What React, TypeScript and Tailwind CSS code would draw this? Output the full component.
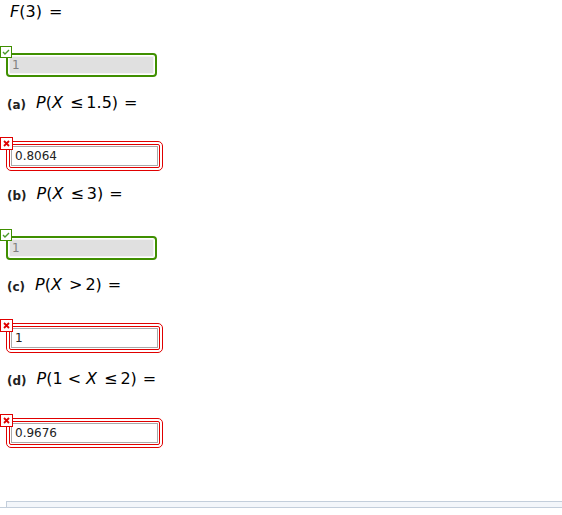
type Status = "right" | "wrong"

const font = { fontFamily: '"DejaVu Sans", Verdana, sans-serif' }

function Badge({ status }: { status: Status }) {
  if (status === "right") {
    return (
      <span className="absolute left-[-6px] top-[-7px] flex h-[12px] w-[12px] items-center justify-center border border-[#3f8f00] bg-white">
        <svg width="8" height="6" viewBox="0 0 8 6">
          <path d="M1 3 L3 5 L7 1" fill="none" stroke="#4a9a2a" strokeWidth="1.4" />
        </svg>
      </span>
    )
  }
  return (
    <span className="absolute left-[-6px] top-[-4px] flex h-[13px] w-[13px] items-center justify-center border border-[#e00000] bg-white">
      <svg width="7" height="7" viewBox="0 0 7 7">
        <path d="M1 1 L6 6 M6 1 L1 6" fill="none" stroke="#e00000" strokeWidth="1.8" />
      </svg>
    </span>
  )
}

function Answer({ status, value }: { status: Status; value: string }) {
  if (status === "right") {
    return (
      <div className="relative ml-[6px] w-[151px]">
        <Badge status={status} />
        <div className="rounded-[4px] border-2 border-[#3f8f00] bg-white p-[1px]">
          <div className="flex h-[18px] items-center border border-[#f4f4f4] bg-[#e0e0e0] px-[2px] text-[12px] text-[#808080]" style={font}>
            {value}
          </div>
        </div>
      </div>
    )
  }
  return (
    <div className="relative ml-[6px] w-[157px]">
      <Badge status={status} />
      <div className="rounded-[5px] border border-[#e00000] bg-white p-[2px]">
        <div className="rounded-[2px] border border-[#e00000] p-[1px]">
          <div className="flex h-[20px] items-center border border-[#a9a9a9] bg-white px-[3px] text-[12px] text-[#222]" style={font}>
            {value}
          </div>
        </div>
      </div>
    </div>
  )
}

function I({ children }: { children: string }) {
  return <span className="italic">{children}</span>
}

function Label({ tag, children }: { tag?: string; children: React.ReactNode }) {
  return (
    <div className="flex h-[24px] items-center text-black" style={font}>
      {tag && <span className="ml-[7px] mr-[10px] mt-[4px] text-[12px] font-bold text-[#222]">{tag}</span>}
      <span className={`text-[16px] ${tag ? "" : "ml-[10px]"}`}>{children}</span>
    </div>
  )
}

export default function App() {
  return (
    <div className="min-h-[515px] bg-white" style={font}>
      <Label>
        <I>F</I>(3)<span className="ml-[7px]">=</span>
      </Label>
      <div className="mt-[29px]">
        <Answer status="right" value="1" />
      </div>

      <div className="mt-[14px]">
        <Label tag="(a)">
          <I>P</I>(<I>X</I><span className="ml-[7px]">≤</span>
          <span className="ml-[3px]">1.5)</span>
          <span className="ml-[6px]">=</span>
        </Label>
      </div>
      <div className="mt-[26px]">
        <Answer status="wrong" value="0.8064" />
      </div>

      <div className="mt-[11px]">
        <Label tag="(b)">
          <I>P</I>(<I>X</I><span className="ml-[7px]">≤</span>
          <span className="ml-[3px]">3)</span>
          <span className="ml-[6px]">=</span>
        </Label>
      </div>
      <div className="mt-[30px]">
        <Answer status="right" value="1" />
      </div>

      <div className="mt-[13px]">
        <Label tag="(c)">
          <I>P</I>(<I>X</I><span className="ml-[7px]">&gt;</span>
          <span className="ml-[3px]">2)</span>
          <span className="ml-[6px]">=</span>
        </Label>
      </div>
      <div className="mt-[26px]">
        <Answer status="wrong" value="1" />
      </div>

      <div className="mt-[14px]">
        <Label tag="(d)">
          <I>P</I>(1<span className="ml-[5px]">&lt;</span>
          <span className="ml-[5px]"><I>X</I></span>
          <span className="ml-[7px]">≤</span>
          <span className="ml-[3px]">2)</span>
          <span className="ml-[6px]">=</span>
        </Label>
      </div>
      <div className="mt-[27px]">
        <Answer status="wrong" value="0.9676" />
      </div>

      <div className="mt-[53px]">
        <div className="ml-[6px] h-[6px] border-l border-t border-[#c3cedb] bg-[#f3f6fa]" />
        <div className="h-[1px] bg-[#c3cedb]" />
      </div>
    </div>
  )
}
